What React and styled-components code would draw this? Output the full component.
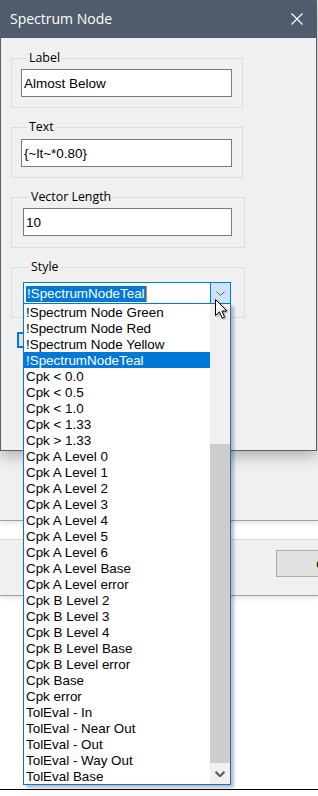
import React from 'react';
import styled, { createGlobalStyle } from 'styled-components';

const GlobalStyle = createGlobalStyle`
  html, body {
    margin: 0;
    padding: 0;
    background: #ffffff;
    overflow: hidden;
  }
`;

const styleItems = [
  '!Spectrum Node Green',
  '!Spectrum Node Red',
  '!Spectrum Node Yellow',
  '!SpectrumNodeTeal',
  'Cpk < 0.0',
  'Cpk < 0.5',
  'Cpk < 1.0',
  'Cpk < 1.33',
  'Cpk > 1.33',
  'Cpk A Level 0',
  'Cpk A Level 1',
  'Cpk A Level 2',
  'Cpk A Level 3',
  'Cpk A Level 4',
  'Cpk A Level 5',
  'Cpk A Level 6',
  'Cpk A Level Base',
  'Cpk A Level error',
  'Cpk B Level 2',
  'Cpk B Level 3',
  'Cpk B Level 4',
  'Cpk B Level Base',
  'Cpk B Level error',
  'Cpk Base',
  'Cpk error',
  'TolEval - In',
  'TolEval - Near Out',
  'TolEval - Out',
  'TolEval - Way Out',
  'TolEval Base',
];

const selected = '!SpectrumNodeTeal';

const Screen = styled.div`
  position: relative;
  width: 318px;
  height: 796px;
  overflow: hidden;
  background: #ffffff;
  font-family: 'Liberation Sans', Arial, sans-serif;
`;

// app window behind the dialog
const BackPanel = styled.div`
  position: relative;
  z-index: 1;
  height: 520px;
  background: #f0f0f0;
  border-bottom: 1px solid #a0a0a0;
  box-shadow: 0 2px 5px rgba(0, 0, 0, 0.12);
`;

const WhiteStrip = styled.div`
  height: 18px;
  background: #ffffff;
`;

const Toolbar = styled.div`
  position: relative;
  z-index: 1;
  height: 45px;
  display: flex;
  align-items: flex-start;
  padding: 10px 0 0 276px;
  background: #f0f0f0;
  border-top: 1px solid #d9d9d9;
  border-bottom: 1px solid #a0a0a0;
  box-shadow: 0 2px 5px rgba(0, 0, 0, 0.12);
`;

const ToolButton = styled.div`
  flex: none;
  width: 90px;
  height: 25px;
  padding-left: 39px;
  display: flex;
  align-items: center;
  background: #e1e1e1;
  border: 1px solid #adadad;
  font: 13px 'Open Sans', sans-serif;
  color: #000;
`;

const BottomRule = styled.div`
  margin-top: 193px;
  height: 1px;
  background: #000000;
`;

const Dialog = styled.div`
  position: absolute;
  z-index: 2;
  top: 0;
  left: 0;
  width: 317px;
  height: 451px;
  box-sizing: border-box;
  display: flex;
  flex-direction: column;
  background: #f0f0f0;
  border: 1px solid #56616f;
  border-top: none;
  box-shadow: 0 5px 14px rgba(0, 0, 0, 0.28);
`;

const TitleBar = styled.div`
  height: 37px;
  flex: none;
  display: flex;
  align-items: center;
  justify-content: space-between;
  padding: 0 13px 1px 9px;
  background: #505c6b;
  color: #ffffff;
  font: 14px 'Open Sans', sans-serif;
`;

const Body = styled.div`
  display: flex;
  flex-direction: column;
  align-items: flex-start;
  gap: 11px;
  padding: 12px 0 0 10px;
`;

const Group = styled.fieldset`
  margin: 0;
  width: ${(p) => (p.$wide ? 234 : 232)}px;
  box-sizing: border-box;
  padding: ${(p) => p.$pt}px 0 ${(p) => p.$pb}px ${(p) => p.$pl}px;
  border: 1px solid #dcdcdc;
  min-inline-size: 0;
`;

const Legend = styled.legend`
  margin-left: 6px;
  padding: 0 2px;
  font: 12.4px/16px 'Open Sans', sans-serif;
  color: #000000;
`;

const TextBox = styled.div`
  width: ${(p) => p.$w}px;
  height: 28px;
  box-sizing: border-box;
  display: flex;
  align-items: center;
  padding: 0 2px;
  background: #ffffff;
  border: 1px solid #7a7a7a;
  font-size: 13.5px;
  color: #000000;
`;

const Combo = styled.div`
  width: 208px;
  height: 23px;
  box-sizing: border-box;
  display: flex;
  background: #ffffff;
  border: 1px solid #0078d7;
`;

const ComboValue = styled.div`
  flex: 1;
  display: flex;
  align-items: center;
  padding-left: 2px;
`;

const Highlight = styled.span`
  background: #0078d7;
  color: #ffffff;
  font-size: 13.4px;
  line-height: 16px;
  padding: 0 1px;
  border-right: 1px solid #f2851f;
`;

const DropButton = styled.div`
  width: 19px;
  display: flex;
  align-items: center;
  justify-content: center;
  background: #cce4f7;
  border-left: 1px solid #0078d7;
`;

const DefaultButton = styled.div`
  margin: 3px 0 0 6px;
  width: 75px;
  height: 16px;
  box-sizing: border-box;
  background: #e1e1e1;
  border: 2px solid #0078d7;
`;

const DropList = styled.div`
  position: absolute;
  z-index: 3;
  top: 303px;
  left: 23px;
  width: 208px;
  height: 482px;
  box-sizing: border-box;
  display: flex;
  background: #ffffff;
  border: 1px solid #0078d7;
  box-shadow: 3px 3px 3px rgba(0, 0, 0, 0.25);
`;

const Items = styled.div`
  width: 186px;
  display: flex;
  flex-direction: column;
`;

const Item = styled.div`
  height: 16px;
  line-height: 17px;
  padding-left: 2px;
  font-size: 13.4px;
  white-space: nowrap;
  color: ${(p) => (p.$active ? '#ffffff' : '#000000')};
  background: ${(p) => (p.$active ? '#0078d7' : 'transparent')};
`;

const ScrollBar = styled.div`
  width: 20px;
  display: flex;
  flex-direction: column;
  background: #f0f0f0;
`;

const Track = styled.div`
  height: 140px;
`;

const Thumb = styled.div`
  height: 319px;
  background: #cdcdcd;
`;

const ArrowButton = styled.div`
  height: 21px;
  display: flex;
  align-items: center;
  justify-content: center;
`;

const Pointer = styled.svg`
  position: absolute;
  z-index: 4;
  left: 215px;
  top: 299px;
  filter: drop-shadow(1px 1px 1px rgba(0, 0, 0, 0.35));
`;

const Chevron = ({ color, w = 9, h = 5, sw = 1 }) => (
  <svg width={w} height={h} viewBox="0 0 9 5">
    <path d="M0.5 0.5 L4.5 4.5 L8.5 0.5" fill="none" stroke={color} strokeWidth={sw} />
  </svg>
);

const App = () => {
  return (
    <>
      <GlobalStyle />
      <Screen>
        <BackPanel />
        <WhiteStrip />
        <Toolbar>
          <ToolButton>OK</ToolButton>
        </Toolbar>
        <BottomRule />

        <Dialog>
          <TitleBar>
            <span>Spectrum Node</span>
            <svg width="12" height="12" viewBox="0 0 12 12">
              <path d="M0.5 0.5 L11.5 11.5 M11.5 0.5 L0.5 11.5" stroke="#ffffff" strokeWidth="1.2" />
            </svg>
          </TitleBar>
          <Body>
            <Group $pt={3} $pb={10} $pl={9}>
              <Legend>Label</Legend>
              <TextBox $w={211}>Almost Below</TextBox>
            </Group>
            <Group $pt={4} $pb={10} $pl={9}>
              <Legend>Text</Legend>
              <TextBox $w={211}>{'{~lt~*0.80}'}</TextBox>
            </Group>
            <Group $wide $pt={3} $pb={11} $pl={11}>
              <Legend>Vector Length</Legend>
              <TextBox $w={209}>10</TextBox>
            </Group>
            <Group $wide $pt={7} $pb={12} $pl={11}>
              <Legend>Style</Legend>
              <Combo>
                <ComboValue>
                  <Highlight>{selected}</Highlight>
                </ComboValue>
                <DropButton>
                  <Chevron color="#606060" />
                </DropButton>
              </Combo>
            </Group>
            <DefaultButton />
          </Body>
        </Dialog>

        <DropList>
          <Items>
            {styleItems.map((name) => (
              <Item key={name} $active={name === selected}>
                {name}
              </Item>
            ))}
          </Items>
          <ScrollBar>
            <Track />
            <Thumb />
            <ArrowButton>
              <Chevron color="#606060" w={10} h={6} sw={2} />
            </ArrowButton>
          </ScrollBar>
        </DropList>

        <Pointer width="13" height="21" viewBox="0 0 13 21">
          <path
            d="M0.5 0.5 L0.5 16.5 L4.5 12.8 L7.2 19.2 L9.6 18.2 L7 12 L12 12 Z"
            fill="#ffffff"
            stroke="#000000"
            strokeWidth="1"
            strokeLinejoin="miter"
          />
        </Pointer>
      </Screen>
    </>
  );
};

export default App;
